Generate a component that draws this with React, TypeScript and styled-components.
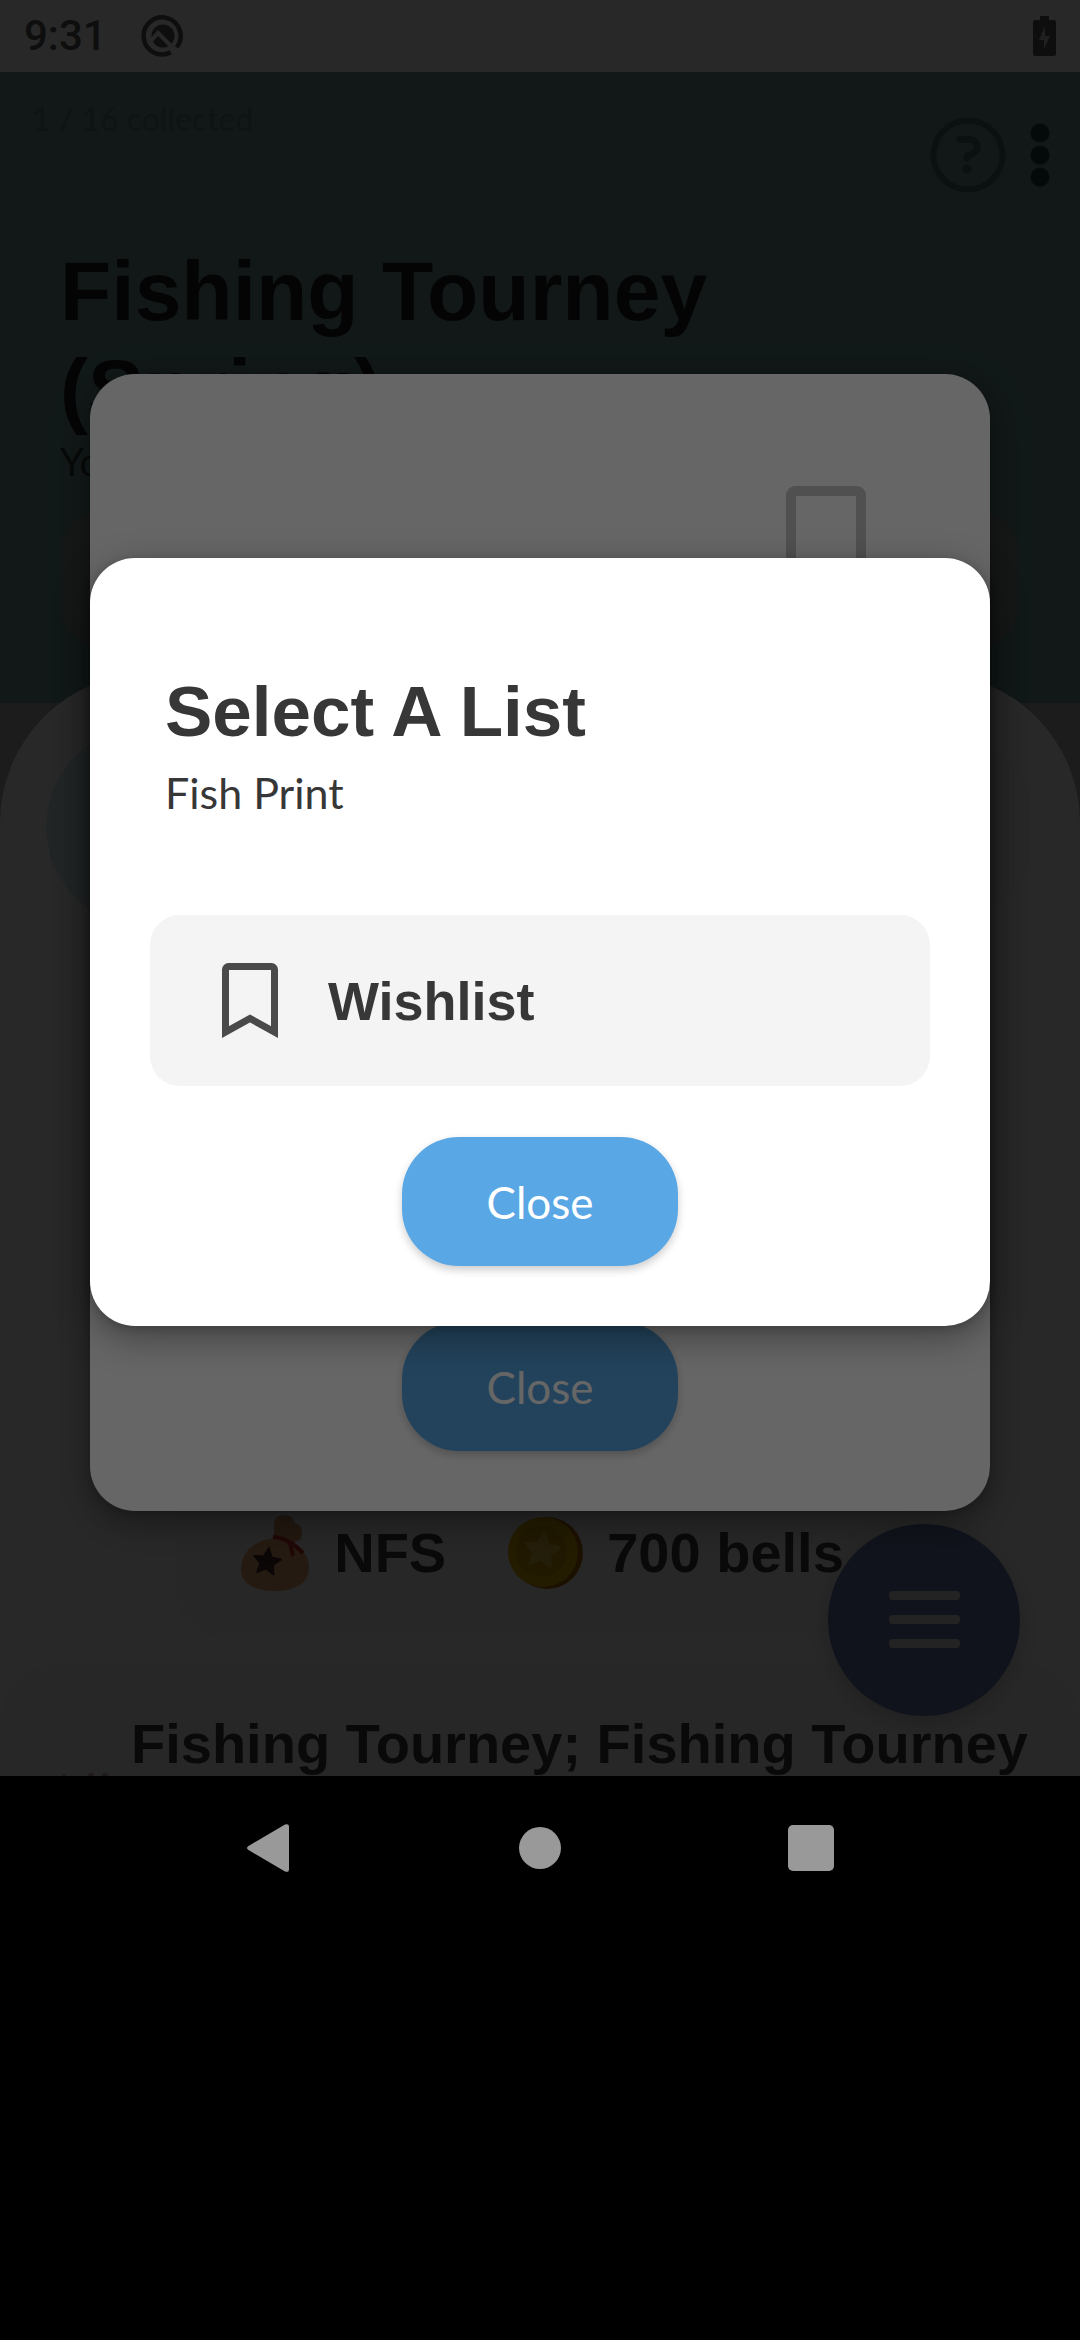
import React from "react";
import styled, { createGlobalStyle } from "styled-components";

const rounded = `"Liberation Sans", Arial, sans-serif`;
const light = `Lato, "Open Sans", sans-serif`;

const GlobalStyle = createGlobalStyle`
  *, *::before, *::after { box-sizing: border-box; }
  body { margin: 0; background: #000; font-kerning: none; }
  button { border: 0; padding: 0; background: none; cursor: pointer; }
  h1, h2, p { margin: 0; }
  svg { display: block; flex: none; }
`;

const Device = styled.div`
  position: relative;
  min-height: 100vh;
  background: #000;
`;

const Viewport = styled.div`
  position: relative;
  height: 1776px;
  overflow: hidden;
  background: #afafaf;
`;

const StatusBar = styled.header`
  display: flex;
  align-items: center;
  justify-content: space-between;
  height: 72px;
  padding: 0 24px;
  background: #fafafa;
  color: #585858;
`;

const StatusGroup = styled.div`
  display: flex;
  align-items: center;
  gap: 34px;
`;

const Clock = styled.time`
  font: 500 42px/48px Roboto, sans-serif;
`;

const Hero = styled.section`
  height: 631px;
  padding: 27px 30px 0 32px;
  background: #709898;
`;

const HeroTop = styled.div`
  display: flex;
  align-items: flex-start;
  justify-content: space-between;
  height: 137px;
`;

const Collected = styled.p`
  font: 400 32px/40px ${light};
  color: #5d7f7f;
`;

const HeroActions = styled.div`
  display: flex;
  align-items: center;
  gap: 24px;
  padding-top: 18px;
`;

const IconButton = styled.button`
  display: flex;
  align-items: center;
  justify-content: center;
`;

const HeroText = styled.div`
  max-width: 800px;
  padding: 6px 0 0 28px;
`;

const EventTitle = styled.h1`
  font: 700 84px/98px ${rounded};
  color: #1c1c1c;
`;

const EventNote = styled.p`
  font: 400 38px/46px ${light};
  color: #2c3838;
`;

const SearchCard = styled.div`
  height: 138px;
  margin: 26px 31px 0 28px;
  border-radius: 45px;
  background: #8c9494;
`;

const Sheet = styled.main`
  position: relative;
  height: 1103px;
  margin-top: -30px;
  padding-top: 54px;
  border-radius: 150px 150px 0 0;
  background: #fcfcfc;
`;

const Bubbles = styled.div`
  display: flex;
  justify-content: space-between;
  padding: 0 46px;
`;

const Bubble = styled.div<{ $tone: string }>`
  width: 200px;
  height: 200px;
  border-radius: 50%;
  background: ${(p) => p.$tone};
`;

const PriceCard = styled.section`
  display: flex;
  align-items: flex-end;
  justify-content: center;
  gap: 62px;
  height: 580px;
  margin: 131px 176px 25px;
  padding: 0 0 44px 4px;
  border-radius: 45px;
  background: #f7f7f7;
`;

const Price = styled.div`
  display: flex;
  align-items: center;
  gap: 24px;
  white-space: nowrap;
  font: 700 56px/82px ${rounded};
  color: #3c3c3c;
`;

const EventCard = styled.section`
  display: flex;
  gap: 20px;
  height: 200px;
  padding: 49px 50px 0 60px;
  border-radius: 60px 60px 0 0;
  background: #f7f7f7;
`;

const EventLabel = styled.p`
  font: 700 56px/64px ${rounded};
  color: #3c3c3c;
  white-space: nowrap;
`;

const EventIcon = styled.div`
  padding-top: 60px;
`;

const MenuFab = styled.button`
  position: absolute;
  right: 60px;
  bottom: 60px;
  display: flex;
  align-items: center;
  justify-content: center;
  width: 192px;
  height: 192px;
  border-radius: 50%;
  background: #6c7ab2;
  box-shadow: 0 8px 24px rgba(0, 0, 0, 0.2);
`;

const Scrim = styled.div<{ $top: number }>`
  position: absolute;
  inset: 0;
  padding: ${(p) => p.$top}px 90px 0;
  background: rgba(0, 0, 0, 0.6);
`;

const Dialog = styled.div<{ $tall?: boolean }>`
  display: flex;
  flex-direction: column;
  align-items: center;
  min-height: ${(p) => (p.$tall ? 1137 : 768)}px;
  padding: ${(p) => (p.$tall ? 112 : 114)}px 60px 60px;
  border-radius: 45px;
  background: #fff;
  box-shadow: 0 12px 36px rgba(0, 0, 0, 0.36), 0 2px 8px rgba(0, 0, 0, 0.16);
`;

const DialogHead = styled.div`
  align-self: stretch;
  padding-left: 15px;
  color: #373737;
`;

const DialogTitle = styled.h2`
  font: 700 71px/80px ${rounded};
`;

const DialogSubtitle = styled.p`
  margin-top: 14px;
  font: 400 43px/54px ${light};
`;

const SaveRow = styled.div`
  display: flex;
  align-self: stretch;
  justify-content: flex-end;
  padding-right: 64px;
`;

const ListButton = styled.button`
  display: flex;
  align-items: center;
  align-self: stretch;
  gap: 50px;
  height: 171px;
  margin: 95px 0 51px;
  padding: 0 72px;
  border-radius: 30px;
  background: #f4f4f4;
  font: 700 54px/64px ${rounded};
  color: #373737;
`;

const CloseButton = styled.button`
  width: 276px;
  height: 129px;
  margin-top: auto;
  border-radius: 57px;
  background: #59a7e5;
  box-shadow: 0 4px 8px rgba(0, 0, 0, 0.2);
  font: 400 44px/54px ${light};
  color: #fff;
`;

const NavBar = styled.nav`
  display: grid;
  grid-template-columns: repeat(3, 1fr);
  height: 144px;
  padding: 0 134px;
  background: #000;
`;

const Bookmark = ({ width, color }: { width: number; color: string }) => (
  <svg width={width} height={(width * 75) / 56} viewBox="0 0 56 75" fill="none">
    <path
      d="M3.5 69V6.5a3 3 0 0 1 3-3h43a3 3 0 0 1 3 3V69L28 55.5Z"
      stroke={color}
      strokeWidth="7"
    />
  </svg>
);

const star = "M0-10 2.9-3.6 9.5-3.1 4.5 1.5 5.9 8.1 0 4.6-5.9 8.1-4.5 1.5-9.5-3.1-2.9-3.6Z";

const BagIcon = () => (
  <svg width="70" height="78" viewBox="0 0 70 78">
    <path d="M34 27V12C34 4 38 1 44 1c6 0 9 3 11 8 7 2 9 9 5 17L48 31Z" fill="#d69a66" />
    <path d="M34 24C14 26 1 39 1 55c0 15 14 22 34 22s34-8 34-23C69 40 58 27 34 24Z" fill="#e6a873" />
    <path d="M33 23c12 1 20 6 30 16M50 29l3 13" stroke="#c8302c" strokeWidth="4" fill="none" />
    <path
      d={star}
      transform="translate(27 48) rotate(8) scale(1.4)"
      fill="#4a2f28"
      stroke="#4a2f28"
      strokeWidth="1.500"
      strokeLinejoin="round"
    />
  </svg>
);

const CoinIcon = () => (
  <svg width="75" height="74" viewBox="0 0 75 74">
    <circle cx="39" cy="37" r="36" fill="#b56a00" />
    <circle cx="35" cy="36" r="35" fill="#e2b208" />
    <circle cx="33" cy="35" r="26" fill="#cf9c00" />
    <path
      d={star}
      transform="translate(34 35) rotate(8) scale(1.7)"
      fill="#e0bd3c"
      stroke="#e0bd3c"
      strokeWidth="2"
      strokeLinejoin="round"
    />
  </svg>
);

const PriceList = () => (
  <PriceCard>
    <Price>
      <BagIcon />
      NFS
    </Price>
    <Price>
      <CoinIcon />
      700 bells
    </Price>
  </PriceCard>
);

export default function App() {
  return (
    <Device>
      <GlobalStyle />
      <Viewport>
        <StatusBar>
          <StatusGroup>
            <Clock>9:31</Clock>
            <svg width="42" height="42" viewBox="0 0 42 42" fill="none">
              <path d="M29.700 37.300A18.500 18.500 0 1 1 35.600 32.400" stroke="#585858" strokeWidth="4.500" />
              <circle cx="22" cy="21" r="11.500" fill="#585858" />
              <path d="M9 27 17 18 36 37" stroke="#fafafa" strokeWidth="4" />
            </svg>
          </StatusGroup>
          <svg width="23" height="40" viewBox="0 0 23 40">
            <path d="M7 0h9v4h5q2 0 2 2v32q0 2-2 2H2q-2 0-2-2V6q0-2 2-2h5Z" fill="#585858" />
            <path d="M12 10 6 24h5v9l6-13h-5Z" fill="#c8c8c8" />
          </svg>
        </StatusBar>
        <Hero>
          <HeroTop>
            <Collected>1 / 16 collected</Collected>
            <HeroActions>
              <IconButton aria-label="Help">
                <svg width="76" height="76" viewBox="0 0 76 76" fill="none" stroke="#466464">
                  <circle cx="38" cy="38" r="34.500" strokeWidth="6" />
                  <path
                    d="M30 22.500h9c10 0 11 12 2 15l-4 1.500v2"
                    strokeWidth="7"
                    strokeLinecap="round"
                    strokeLinejoin="round"
                  />
                  <circle cx="37" cy="52" r="4.500" fill="#466464" stroke="none" />
                </svg>
              </IconButton>
              <IconButton aria-label="More options">
                <svg width="20" height="64" viewBox="0 0 20 64" fill="#1f4343">
                  <circle cx="10" cy="10" r="9.500" />
                  <circle cx="10" cy="32" r="9.500" />
                  <circle cx="10" cy="54" r="9.500" />
                </svg>
              </IconButton>
            </HeroActions>
          </HeroTop>
          <HeroText>
            <EventTitle>
              Fishing Tourney
              <br />
              (Spring)
            </EventTitle>
            <EventNote>You</EventNote>
          </HeroText>
          <SearchCard />
        </Hero>
        <Sheet>
          <Bubbles>
            <Bubble $tone="#d6ecf3" />
            <Bubble $tone="#f9f9f9" />
          </Bubbles>
          <PriceList />
          <EventCard>
            <EventIcon>
              <svg width="51" height="20" viewBox="0 0 51 20" fill="#c8a4a4">
                <circle cx="4" cy="4" r="2" />
                <circle cx="31" cy="4" r="3" />
                <circle cx="45" cy="4" r="3" />
              </svg>
            </EventIcon>
            <EventLabel>Fishing Tourney; Fishing Tourney</EventLabel>
          </EventCard>
        </Sheet>
        <MenuFab aria-label="Menu">
          <svg width="72" height="58" viewBox="0 0 72 58" fill="#dcdcdc">
            <rect width="71" height="9" rx="4" x="1" />
            <rect y="24" width="71" height="9" rx="4" x="1" />
            <rect y="48" width="71" height="9" rx="4" x="1" />
          </svg>
        </MenuFab>
        <Scrim $top={374}>
          <Dialog $tall>
            <SaveRow>
              <IconButton aria-label="Add to list">
                <Bookmark width={80} color="#c8c8c8" />
              </IconButton>
            </SaveRow>
            <CloseButton>Close</CloseButton>
          </Dialog>
        </Scrim>
        <Scrim $top={558}>
          <Dialog role="dialog" aria-labelledby="list-title">
            <DialogHead>
              <DialogTitle id="list-title">Select A List</DialogTitle>
              <DialogSubtitle>Fish Print</DialogSubtitle>
            </DialogHead>
            <ListButton>
              <Bookmark width={56} color="#4a4a4a" />
              Wishlist
            </ListButton>
            <CloseButton>Close</CloseButton>
          </Dialog>
        </Scrim>
      </Viewport>
      <NavBar>
        <IconButton aria-label="Back">
          <svg width="44" height="48" viewBox="0 0 44 48" fill="#999">
            <path d="M38 .6Q42-1 42 3v42q0 4-4 2.400L1.500 26q-3-2 0-4Z" />
          </svg>
        </IconButton>
        <IconButton aria-label="Home">
          <svg width="42" height="42" viewBox="0 0 42 42" fill="#999">
            <circle cx="21" cy="21" r="21" />
          </svg>
        </IconButton>
        <IconButton aria-label="Recent apps">
          <svg width="46" height="46" viewBox="0 0 46 46" fill="#999">
            <rect width="46" height="46" rx="5" />
          </svg>
        </IconButton>
      </NavBar>
    </Device>
  );
}
